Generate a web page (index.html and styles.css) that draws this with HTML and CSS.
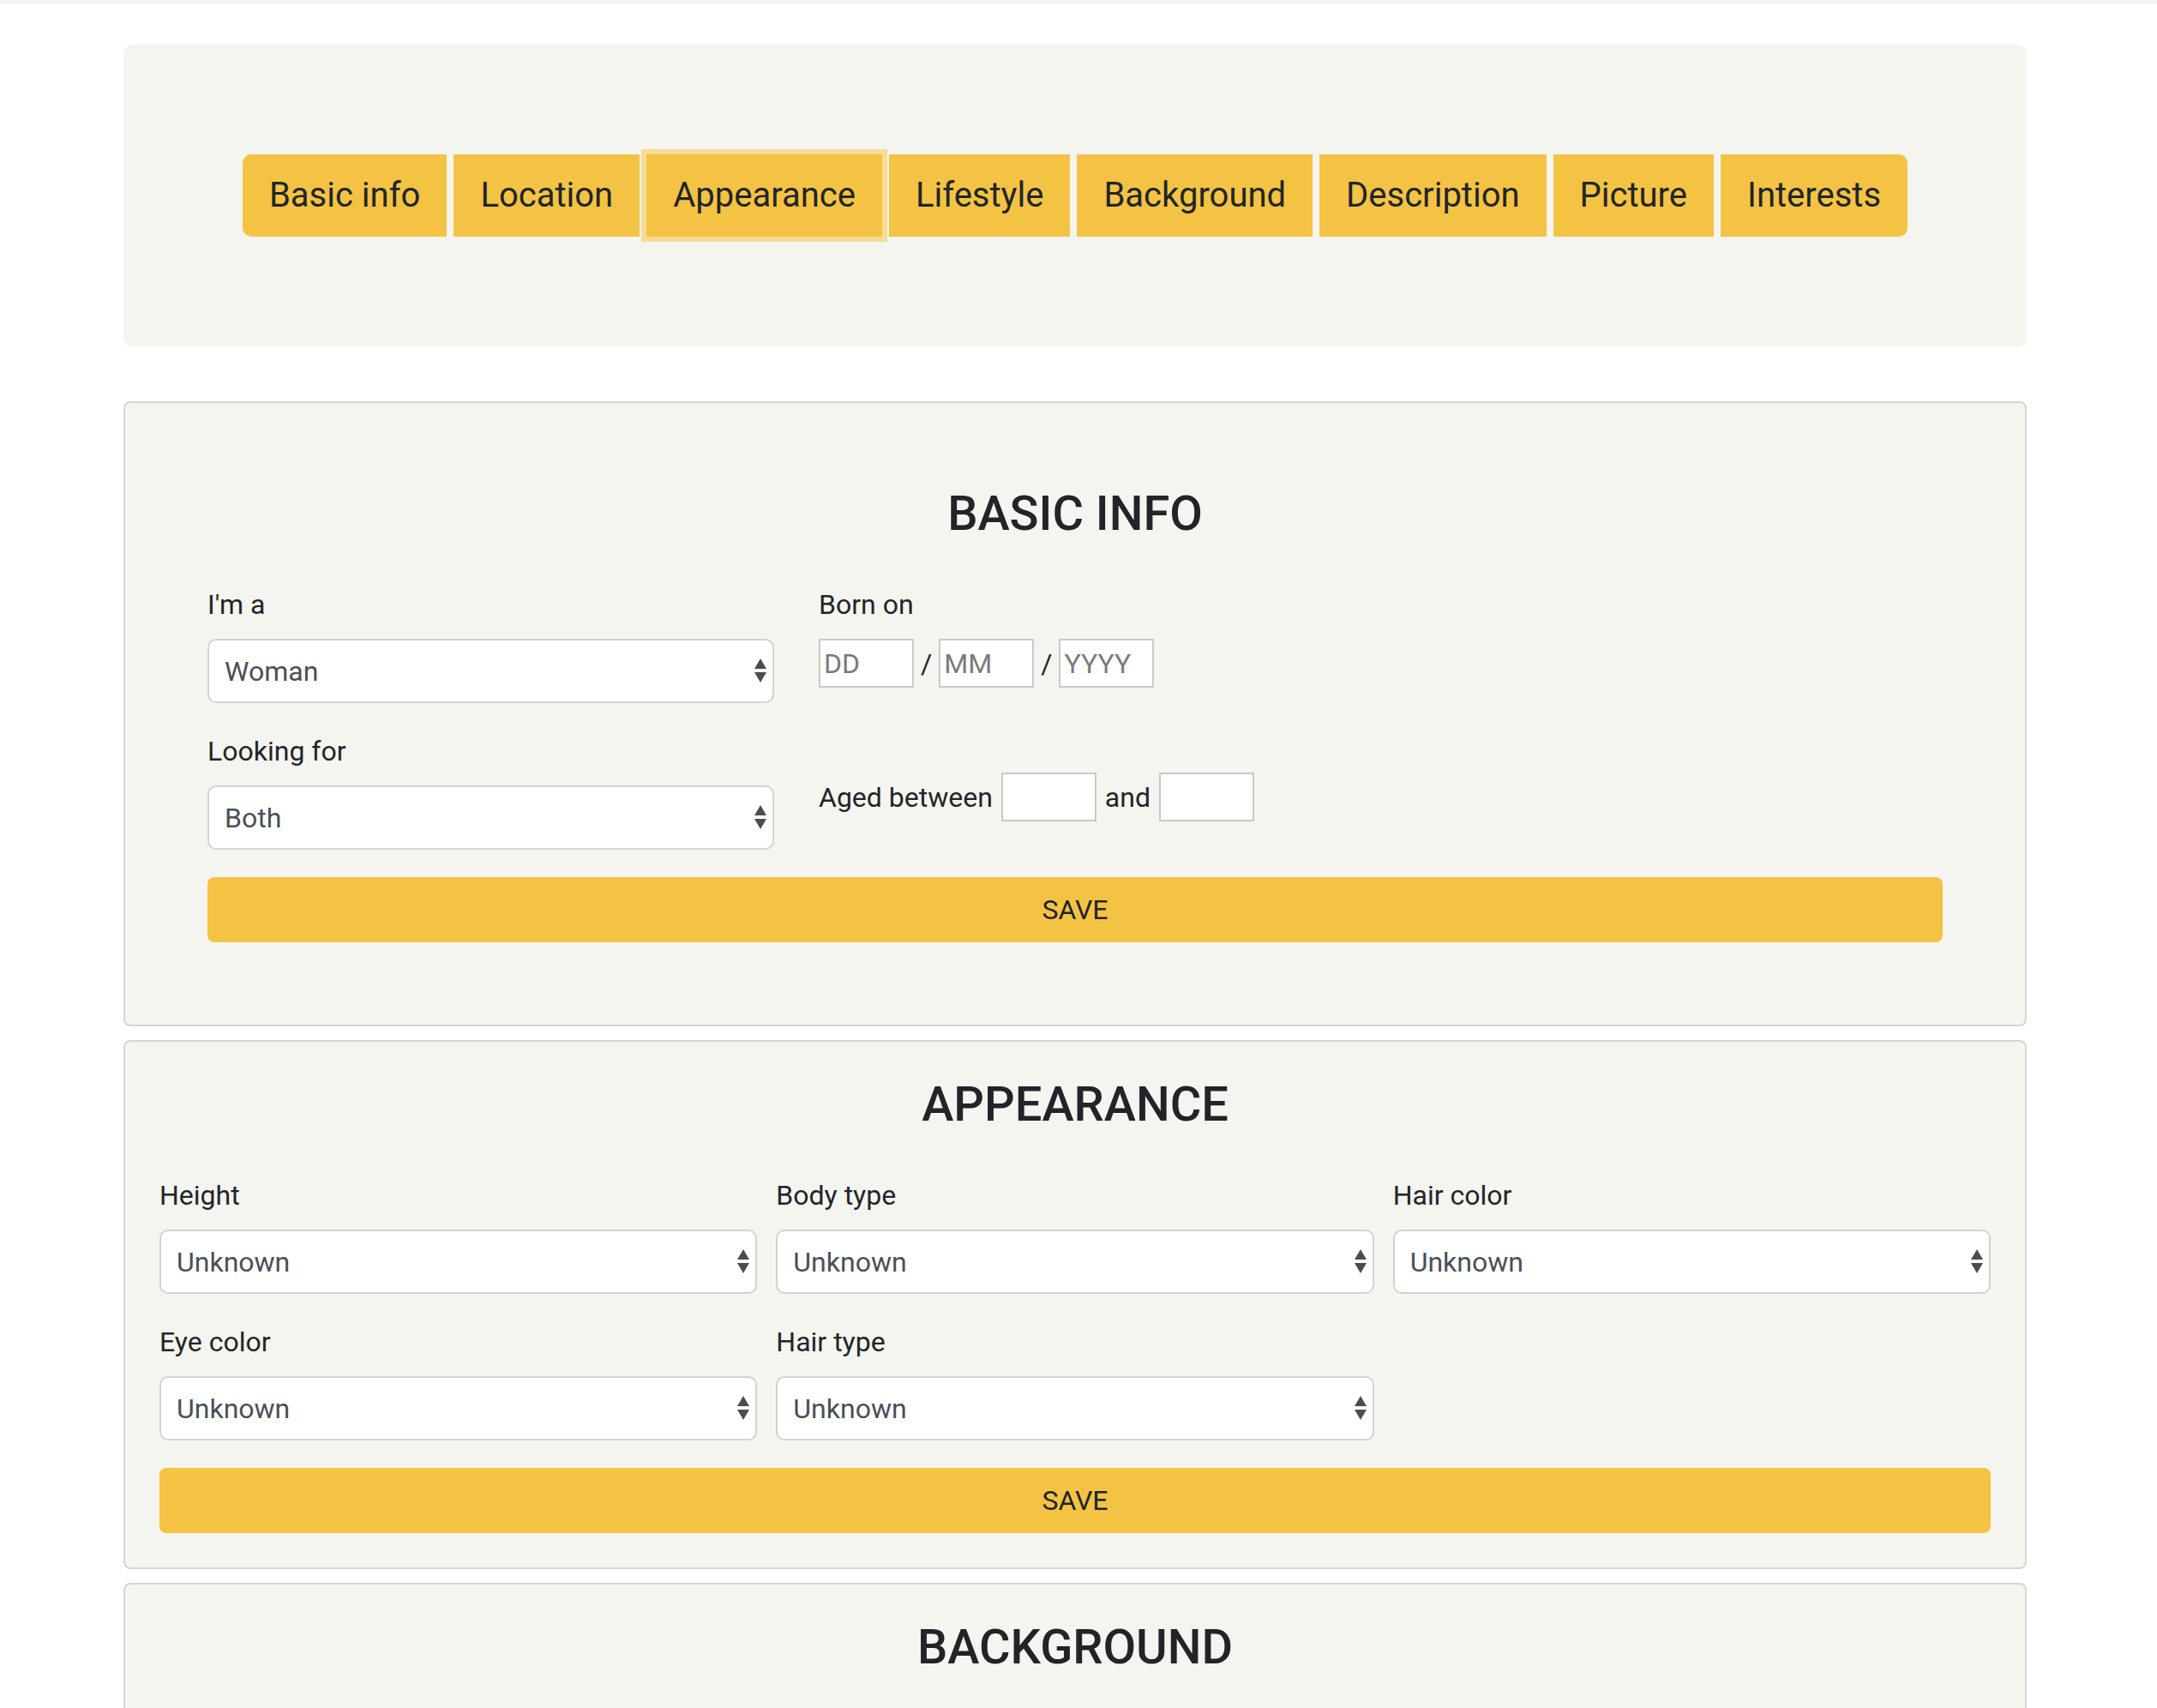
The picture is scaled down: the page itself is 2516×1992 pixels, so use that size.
FILE: index.html
```html
<!DOCTYPE html>
<html lang="en">
<head>
<meta charset="utf-8">
<title>Edit profile</title>
<link rel="stylesheet" href="styles.css">
</head>
<body>
<div class="topbar"></div>
<main class="page">
  <div class="jumbo">
    <nav class="tabs">
      <button class="tab tab-first">Basic info</button>
      <button class="tab">Location</button>
      <button class="tab tab-active">Appearance</button>
      <button class="tab">Lifestyle</button>
      <button class="tab">Background</button>
      <button class="tab">Description</button>
      <button class="tab">Picture</button>
      <button class="tab tab-last">Interests</button>
    </nav>
  </div>

  <section class="card card-roomy">
    <h3 class="card-title">BASIC INFO</h3>
    <div class="basic-grid">
      <div class="field">
        <label class="field-label">I'm a</label>
        <div class="select-wrap">
          <select class="select"><option>Woman</option><option>Man</option></select>
          <svg class="select-arrows" viewBox="0 0 14 28"><polygon points="7,0 14,12 0,12"/><polygon points="0,16 14,16 7,28"/></svg>
        </div>
      </div>
      <div class="field field-right">
        <label class="field-label">Born on</label>
        <div class="inline-row date-row">
          <input class="box-input" placeholder="DD">
          <span class="slash">/</span>
          <input class="box-input" placeholder="MM">
          <span class="slash">/</span>
          <input class="box-input" placeholder="YYYY">
        </div>
      </div>
      <div class="field">
        <label class="field-label">Looking for</label>
        <div class="select-wrap">
          <select class="select"><option>Both</option><option>Women</option><option>Men</option></select>
          <svg class="select-arrows" viewBox="0 0 14 28"><polygon points="7,0 14,12 0,12"/><polygon points="0,16 14,16 7,28"/></svg>
        </div>
      </div>
      <div class="field field-right">
        <div class="inline-row age-row">
          <span>Aged between</span>
          <input class="box-input">
          <span>and</span>
          <input class="box-input">
        </div>
      </div>
    </div>
    <button class="save">Save</button>
  </section>

  <section class="card">
    <h3 class="card-title">APPEARANCE</h3>
    <div class="three-grid">
      <div class="field">
        <label class="field-label">Height</label>
        <div class="select-wrap">
          <select class="select"><option>Unknown</option></select>
          <svg class="select-arrows" viewBox="0 0 14 28"><polygon points="7,0 14,12 0,12"/><polygon points="0,16 14,16 7,28"/></svg>
        </div>
      </div>
      <div class="field">
        <label class="field-label">Body type</label>
        <div class="select-wrap">
          <select class="select"><option>Unknown</option></select>
          <svg class="select-arrows" viewBox="0 0 14 28"><polygon points="7,0 14,12 0,12"/><polygon points="0,16 14,16 7,28"/></svg>
        </div>
      </div>
      <div class="field">
        <label class="field-label">Hair color</label>
        <div class="select-wrap">
          <select class="select"><option>Unknown</option></select>
          <svg class="select-arrows" viewBox="0 0 14 28"><polygon points="7,0 14,12 0,12"/><polygon points="0,16 14,16 7,28"/></svg>
        </div>
      </div>
      <div class="field">
        <label class="field-label">Eye color</label>
        <div class="select-wrap">
          <select class="select"><option>Unknown</option></select>
          <svg class="select-arrows" viewBox="0 0 14 28"><polygon points="7,0 14,12 0,12"/><polygon points="0,16 14,16 7,28"/></svg>
        </div>
      </div>
      <div class="field">
        <label class="field-label">Hair type</label>
        <div class="select-wrap">
          <select class="select"><option>Unknown</option></select>
          <svg class="select-arrows" viewBox="0 0 14 28"><polygon points="7,0 14,12 0,12"/><polygon points="0,16 14,16 7,28"/></svg>
        </div>
      </div>
    </div>
    <button class="save">Save</button>
  </section>

  <section class="card card-open">
    <h3 class="card-title">BACKGROUND</h3>
  </section>
</main>
</body>
</html>
```

FILE: styles.css
```css
* {
  box-sizing: border-box;
}

body {
  margin: 0;
  background: #ffffff;
  color: #212529;
  font-family: Roboto, "Liberation Sans", Arial, sans-serif;
  font-size: 32px;
  line-height: 48px;
}

.topbar {
  height: 4px;
  background: #f3f4f6;
}

.page {
  width: 2220px;
  margin: 48px 0 0 144px;
}

.jumbo {
  background: #f5f5f0;
  border-radius: 10px;
  padding: 128px 64px;
  margin-bottom: 64px;
  display: flex;
  justify-content: center;
}

.tabs {
  display: flex;
  gap: 8px;
}

.tab {
  height: 96px;
  padding: 0 31px;
  border: 0;
  border-radius: 0;
  background: #f5c344;
  color: #212529;
  font-family: Roboto, "Liberation Sans", Arial, sans-serif;
  font-size: 40px;
  font-weight: 400;
  line-height: 96px;
  cursor: pointer;
}

.tab-first {
  border-radius: 10px 0 0 10px;
}

.tab-last {
  border-radius: 0 10px 10px 0;
}

.tab-active {
  position: relative;
  box-shadow: 0 0 0 6px #f8dc95;
}

.card {
  background: #f5f5f0;
  border: 2px solid #d6d6d1;
  border-radius: 8px;
  padding: 40px;
  margin-bottom: 16px;
}

.card-roomy {
  padding: 96px;
}

.card-open {
  min-height: 420px;
}

.card-title {
  margin: 0 0 48px;
  font-size: 56px;
  font-weight: 500;
  line-height: 67px;
  text-align: center;
  color: #212529;
}

.field-label {
  display: block;
  line-height: 48px;
  margin-bottom: 16px;
}

.select-wrap {
  position: relative;
}

.select {
  -webkit-appearance: none;
  appearance: none;
  display: block;
  width: 100%;
  height: 75px;
  border: 2px solid #d3d3d3;
  border-radius: 10px;
  background: #ffffff;
  color: #495057;
  font-family: Roboto, "Liberation Sans", Arial, sans-serif;
  font-size: 32px;
  padding: 0 40px 0 18px;
}

.select-arrows {
  position: absolute;
  right: 9px;
  top: 50%;
  width: 14px;
  height: 28px;
  margin-top: -15px;
  fill: #4a4d50;
  pointer-events: none;
}

.basic-grid {
  display: grid;
  grid-template-columns: 661px 1fr;
  column-gap: 52px;
  row-gap: 32px;
  margin-bottom: 32px;
}

.inline-row {
  display: flex;
  align-items: center;
  gap: 10px;
}

.date-row {
  gap: 8px;
}

.age-row {
  margin-top: 49px;
}

.box-input {
  width: 111px;
  height: 57px;
  border: 2px solid #c9c9c9;
  border-radius: 0;
  background: #ffffff;
  color: #495057;
  font-family: Roboto, "Liberation Sans", Arial, sans-serif;
  font-size: 32px;
  padding: 0 4px;
}

.box-input::placeholder {
  color: #7b7b7b;
}

.three-grid {
  display: grid;
  grid-template-columns: repeat(3, 1fr);
  column-gap: 22px;
  row-gap: 32px;
  margin-bottom: 32px;
}

.save {
  display: block;
  width: 100%;
  height: 76px;
  border: 0;
  border-radius: 8px;
  background: #f5c344;
  color: #212529;
  font-family: Roboto, "Liberation Sans", Arial, sans-serif;
  font-size: 32px;
  text-transform: uppercase;
  cursor: pointer;
}
```
